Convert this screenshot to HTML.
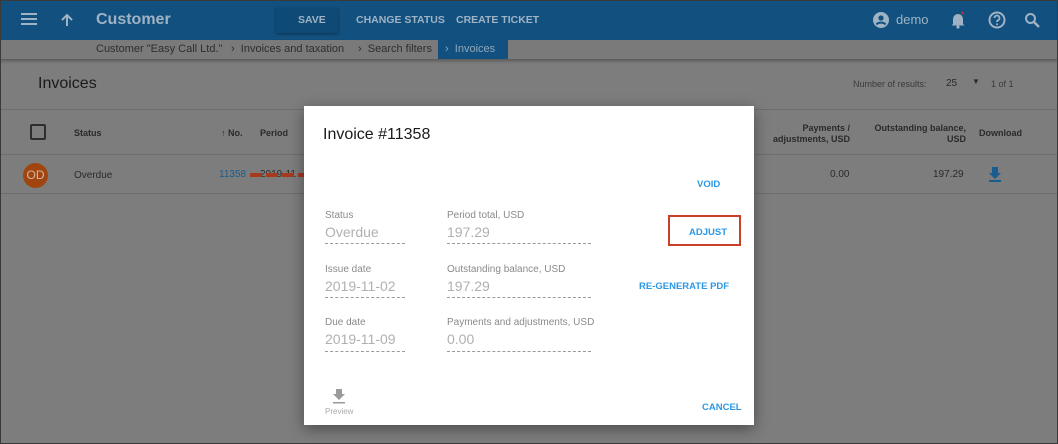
<!DOCTYPE html>
<html><head><style>
*{margin:0;padding:0;box-sizing:border-box}
body{width:1058px;height:444px;overflow:hidden;font-family:"Liberation Sans",sans-serif;background:#7d7d7d;position:relative}
.frame{position:absolute;inset:0;border:1px solid #3a3a3a;z-index:50;pointer-events:none}
.hdr{position:absolute;left:0;top:0;width:1058px;height:40px;background:#12507f;color:#9fb3c4}
.crumb{position:absolute;left:0;top:40px;width:1058px;height:19px;background:#7a7a7a;box-shadow:0 2px 3px rgba(0,0,0,.3);font-size:11px;color:#2e2e2e}
.abs{position:absolute;white-space:nowrap}
.line{position:absolute;height:1px;background:#6e6e6e;left:0;width:1058px}
.th{font-size:9px;font-weight:bold;color:#2a2a2a}
.dlg{position:absolute;left:304px;top:106px;width:450px;height:319px;background:#fff;box-shadow:0 4px 14px rgba(0,0,0,.4)}
.lbl{font-size:10px;color:#8a8a8a}
.val{font-size:14px;color:#b0b0b0}
.dash{position:absolute;height:0;border-top:1px dashed #9a9a9a}
.btn{font-size:9.5px;font-weight:bold;color:#2b98e6}
</style></head><body>
<div class="frame"></div>
<div class="hdr">
 <div class="abs" style="left:21px;top:13px;width:16px;height:2px;background:#9fb3c4;box-shadow:0 5px 0 #9fb3c4,0 10px 0 #9fb3c4"></div>
 <svg class="abs" style="left:59px;top:12px" width="16" height="16" viewBox="0 0 16 16"><path d="M8 14V3M3 8l5-5 5 5" stroke="#9fb3c4" stroke-width="2" fill="none"/></svg>
 <div class="abs" style="left:96px;top:11px;font-size:16px;font-weight:bold">Customer</div>
 <div class="abs" style="left:276px;top:8px;width:62px;height:25px;background:#0f4a76;box-shadow:0 1px 3px rgba(0,0,0,.4)"></div>
 <div class="abs" style="left:298px;top:14px;font-size:10.5px;font-weight:bold">SAVE</div>
 <div class="abs" style="left:356px;top:14px;font-size:10.5px;font-weight:bold">CHANGE STATUS</div>
 <div class="abs" style="left:456px;top:14px;font-size:10.5px;font-weight:bold">CREATE TICKET</div>
 <svg class="abs" style="left:873px;top:12px" width="16" height="16" viewBox="0 0 16 16"><circle cx="8" cy="8" r="8" fill="#9fb3c4"/><circle cx="8" cy="6" r="2.6" fill="#12507f"/><path d="M3.5 12.5c1.5-2.5 7.5-2.5 9 0" stroke="#12507f" stroke-width="2" fill="none"/></svg>
 <div class="abs" style="left:896px;top:12px;font-size:13px">demo</div>
 <svg class="abs" style="left:951px;top:11px" width="14" height="18" viewBox="0 0 14 18"><path d="M2 13V8a5 5 0 0 1 10 0v5l1.5 1.5h-13z" fill="#9fb3c4"/><circle cx="7" cy="16" r="1.6" fill="#9fb3c4"/><circle cx="11.5" cy="2" r="1.5" fill="#a33"/></svg>
 <svg class="abs" style="left:988px;top:11px" width="18" height="18" viewBox="0 0 18 18"><circle cx="9" cy="9" r="7.5" stroke="#9fb3c4" stroke-width="2" fill="none"/><path d="M6.5 7a2.5 2.5 0 1 1 3.5 2.3c-.8.4-1 .8-1 1.7" stroke="#9fb3c4" stroke-width="1.8" fill="none"/><circle cx="9" cy="13.3" r="1" fill="#9fb3c4"/></svg>
 <svg class="abs" style="left:1024px;top:12px" width="16" height="16" viewBox="0 0 16 16"><circle cx="6.5" cy="6.5" r="4.5" stroke="#9fb3c4" stroke-width="2" fill="none"/><path d="M10 10l5 5" stroke="#9fb3c4" stroke-width="2.4"/></svg>
</div>
<div class="crumb">
 <div class="abs" style="left:96px;top:3px">Customer "Easy Call Ltd."</div>
 <div class="abs" style="left:231px;top:3px">›&nbsp; Invoices and taxation</div>
 <div class="abs" style="left:358px;top:3px">›&nbsp; Search filters</div>
 <div class="abs" style="left:438px;top:0;width:70px;height:19px;background:#12507f;color:#8fa8bb;padding:3px 0 0 7px">›&nbsp; Invoices</div>
</div>
<div class="abs" style="left:38px;top:75px;font-size:16px;color:#1a1a1a">Invoices</div>
<div class="abs" style="left:853px;top:79px;font-size:9px;color:#3a3a3a">Number of results:</div>
<div class="abs" style="left:946px;top:78px;font-size:10px;color:#2a2a2a">25</div>
<div class="abs" style="left:972px;top:77px;font-size:8px;color:#2a2a2a">▼</div>
<div class="abs" style="left:991px;top:79px;font-size:9px;color:#3a3a3a">1 of 1</div>
<div class="line" style="top:109px"></div>
<div class="line" style="top:154px"></div>
<div class="line" style="top:193px"></div>
<div class="abs" style="left:30px;top:124px;width:16px;height:16px;border:2px solid #2e2e2e;border-radius:2px"></div>
<div class="abs th" style="left:74px;top:128px">Status</div>
<div class="abs th" style="left:221px;top:128px">↑ No.</div>
<div class="abs th" style="left:260px;top:128px">Period</div>
<div class="abs th" style="left:740px;top:123px;text-align:right;width:110px;line-height:11px">Payments /<br>adjustments, USD</div>
<div class="abs th" style="left:850px;top:123px;text-align:right;width:116px;line-height:11px">Outstanding balance,<br>USD</div>
<div class="abs th" style="left:979px;top:128px">Download</div>
<div class="abs" style="left:23px;top:163px;width:25px;height:25px;border-radius:50%;background:#a0450f;color:#d8b59f;font-size:12px;text-align:center;line-height:25px">OD</div>
<div class="abs" style="left:74px;top:170px;font-size:10px;color:#2a2a2a">Overdue</div>
<div class="abs" style="left:219px;top:169px;font-size:10px;color:#195d8e">11358</div>
<div class="abs" style="left:260px;top:169px;font-size:10px;color:#2a2a2a">2019-11</div>
<svg class="abs" style="left:248px;top:167px" width="84" height="16" viewBox="0 0 84 16"><path d="M2 8h58" stroke="#a53a1f" stroke-width="4" stroke-dasharray="12 4"/><path d="M62 1l15 7-15 7 3-7z" fill="#a53a1f"/></svg>
<div class="abs" style="left:830px;top:169px;font-size:10px;color:#2a2a2a">0.00</div>
<div class="abs" style="left:933px;top:169px;font-size:10px;color:#2a2a2a">197.29</div>
<svg class="abs" style="left:988px;top:166px" width="14" height="16" viewBox="0 0 14 16"><path d="M4 1h6v6h3l-6 6-6-6h3z" fill="#195d8e"/><rect x="1" y="14" width="12" height="2" fill="#195d8e"/></svg>
<div class="dlg">
 <div class="abs" style="left:19px;top:20px;font-size:16px;color:#1a1a1a">Invoice #11358</div>
 <div class="abs btn" style="left:393px;top:73px">VOID</div>
 <div class="abs lbl" style="left:21px;top:104px">Status</div>
 <div class="abs val" style="left:21px;top:118px">Overdue</div>
 <div class="dash" style="left:21px;top:137px;width:80px"></div>
 <div class="abs lbl" style="left:143px;top:104px">Period total, USD</div>
 <div class="abs val" style="left:143px;top:118px">197.29</div>
 <div class="dash" style="left:143px;top:137px;width:144px"></div>
 <div class="abs" style="left:364px;top:109px;width:73px;height:31px;border:2px solid #c8402a"></div>
 <div class="abs btn" style="left:385px;top:121px">ADJUST</div>
 <div class="abs lbl" style="left:21px;top:158px">Issue date</div>
 <div class="abs val" style="left:21px;top:172px">2019-11-02</div>
 <div class="dash" style="left:21px;top:191px;width:80px"></div>
 <div class="abs lbl" style="left:143px;top:158px">Outstanding balance, USD</div>
 <div class="abs val" style="left:143px;top:172px">197.29</div>
 <div class="dash" style="left:143px;top:191px;width:144px"></div>
 <div class="abs btn" style="left:335px;top:175px">RE-GENERATE PDF</div>
 <div class="abs lbl" style="left:21px;top:211px">Due date</div>
 <div class="abs val" style="left:21px;top:225px">2019-11-09</div>
 <div class="dash" style="left:21px;top:245px;width:80px"></div>
 <div class="abs lbl" style="left:143px;top:211px">Payments and adjustments, USD</div>
 <div class="abs val" style="left:143px;top:225px">0.00</div>
 <div class="dash" style="left:143px;top:245px;width:144px"></div>
 <svg class="abs" style="left:28px;top:283px" width="14" height="15" viewBox="0 0 14 15"><path d="M4 0h6v5h3l-6 6-6-6h3z" fill="#9a9a9a"/><rect x="1" y="13" width="12" height="1.5" fill="#9a9a9a"/></svg>
 <div class="abs" style="left:21px;top:301px;font-size:8px;color:#aaa">Preview</div>
 <div class="abs btn" style="left:398px;top:296px">CANCEL</div>
</div>
</body></html>
